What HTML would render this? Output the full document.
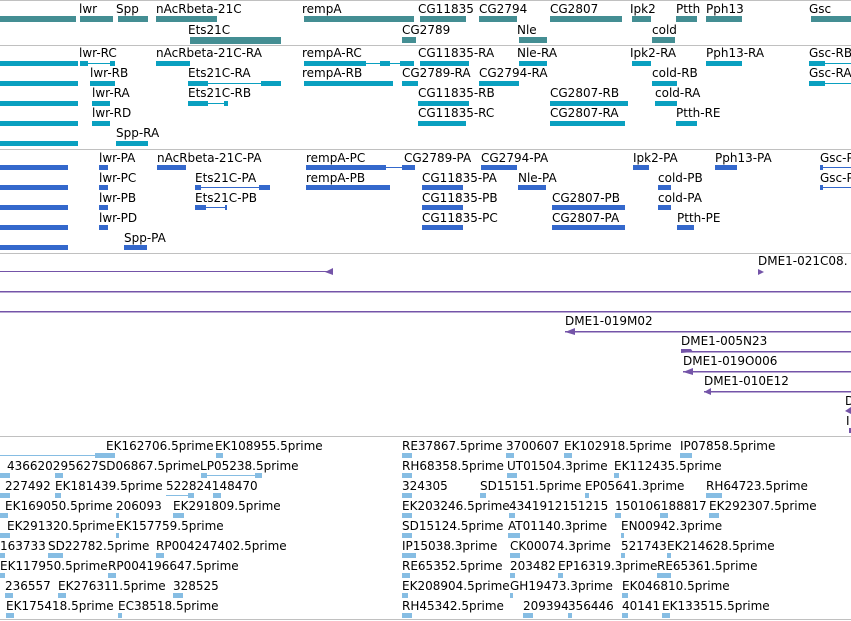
<!DOCTYPE html>
<html><head><meta charset="utf-8"><style>
html,body{margin:0;padding:0;background:#fff;width:851px;height:621px;overflow:hidden}
svg{display:block}
text{font-family:"DejaVu Sans","Liberation Sans",sans-serif;font-size:12px;fill:#000}
.g{fill:#448e93}.r{fill:#0aa0c0}.p{fill:#3468cc}.v{fill:#7454a8}.e{fill:#86bde3}
</style></head><body>
<svg width="851" height="621" viewBox="0 0 851 621">
<g fill="#c0c0c0">
<rect x="0" y="0" width="851" height="1"/><rect x="0" y="45" width="851" height="1"/>
<rect x="0" y="149" width="851" height="1"/><rect x="0" y="253" width="851" height="1"/>
<rect x="0" y="436" width="851" height="1"/><rect x="0" y="619" width="851" height="1"/>
</g>
<text x="79" y="13">lwr</text><text x="116" y="13">Spp</text><text x="156" y="13">nAcRbeta-21C</text>
<text x="302" y="13">rempA</text><text x="418" y="13">CG11835</text><text x="479" y="13">CG2794</text>
<text x="550" y="13">CG2807</text><text x="630" y="13">Ipk2</text><text x="676" y="13">Ptth</text>
<text x="706" y="13">Pph13</text><text x="809" y="13">Gsc</text>
<text x="188" y="34">Ets21C</text><text x="402" y="34">CG2789</text><text x="517" y="34">Nle</text><text x="652" y="34">cold</text>
<g class="g">
<rect x="0" y="16" width="76" height="6"/><rect x="80" y="16" width="33" height="6"/><rect x="118" y="16" width="30" height="6"/>
<rect x="156" y="16" width="61" height="6"/><rect x="304" y="16" width="110" height="6"/><rect x="420" y="16" width="46" height="6"/>
<rect x="479" y="16" width="38" height="6"/><rect x="550" y="16" width="72" height="6"/><rect x="632" y="16" width="19" height="6"/>
<rect x="676" y="16" width="21" height="6"/><rect x="706" y="16" width="36" height="6"/><rect x="811" y="16" width="40" height="6"/>
<rect x="190" y="37" width="91" height="7"/><rect x="402" y="37" width="14" height="6"/><rect x="519" y="37" width="28" height="6"/><rect x="652" y="37" width="23" height="6"/>
</g>
<text x="79" y="57">lwr-RC</text><text x="156" y="57">nAcRbeta-21C-RA</text><text x="302" y="57">rempA-RC</text><text x="418" y="57">CG11835-RA</text><text x="517" y="57">Nle-RA</text><text x="630" y="57">Ipk2-RA</text><text x="706" y="57">Pph13-RA</text><text x="809" y="57">Gsc-RB</text>
<text x="90" y="77">lwr-RB</text><text x="188" y="77">Ets21C-RA</text><text x="302" y="77">rempA-RB</text><text x="402" y="77">CG2789-RA</text><text x="479" y="77">CG2794-RA</text><text x="652" y="77">cold-RB</text><text x="809" y="77">Gsc-RA</text>
<text x="92" y="97">lwr-RA</text><text x="188" y="97">Ets21C-RB</text><text x="418" y="97">CG11835-RB</text><text x="550" y="97">CG2807-RB</text><text x="655" y="97">cold-RA</text>
<text x="92" y="117">lwr-RD</text><text x="418" y="117">CG11835-RC</text><text x="550" y="117">CG2807-RA</text><text x="676" y="117">Ptth-RE</text>
<text x="116" y="137">Spp-RA</text>
<g class="r">
<rect x="0" y="61" width="78" height="5"/><rect x="0" y="81" width="78" height="5"/><rect x="0" y="101" width="78" height="5"/><rect x="0" y="121" width="78" height="5"/><rect x="0" y="141" width="78" height="5"/>
<rect x="80" y="61" width="8" height="5"/><rect x="88" y="63" width="24" height="1"/><rect x="110" y="61" width="5" height="5"/>
<rect x="156" y="61" width="34" height="5"/><rect x="304" y="61" width="62" height="5"/><rect x="366" y="63" width="48" height="1"/><rect x="400" y="61" width="14" height="5"/><rect x="380" y="61" width="10" height="5"/>
<rect x="420" y="61" width="49" height="5"/><rect x="519" y="61" width="28" height="5"/><rect x="632" y="61" width="19" height="5"/><rect x="706" y="61" width="36" height="5"/>
<rect x="809" y="61" width="16" height="5"/><rect x="825" y="63" width="26" height="1"/>
<rect x="90" y="81" width="25" height="5"/><rect x="188" y="81" width="20" height="5"/><rect x="208" y="83" width="55" height="1"/><rect x="261" y="81" width="20" height="5"/>
<rect x="304" y="81" width="89" height="5"/><rect x="402" y="81" width="16" height="5"/><rect x="479" y="81" width="40" height="5"/><rect x="652" y="81" width="25" height="5"/>
<rect x="809" y="81" width="16" height="5"/><rect x="825" y="83" width="26" height="1"/>
<rect x="92" y="101" width="18" height="5"/><rect x="188" y="101" width="20" height="5"/><rect x="208" y="103" width="20" height="1"/><rect x="224" y="101" width="4" height="5"/>
<rect x="418" y="101" width="51" height="5"/><rect x="550" y="101" width="78" height="5"/><rect x="655" y="101" width="22" height="5"/>
<rect x="92" y="121" width="18" height="5"/><rect x="418" y="121" width="48" height="5"/><rect x="550" y="121" width="75" height="5"/><rect x="676" y="121" width="21" height="5"/>
<rect x="116" y="141" width="32" height="5"/>
</g>
<text x="99" y="162">lwr-PA</text><text x="157" y="162">nAcRbeta-21C-PA</text><text x="306" y="162">rempA-PC</text><text x="404" y="162">CG2789-PA</text><text x="481" y="162">CG2794-PA</text><text x="633" y="162">Ipk2-PA</text><text x="715" y="162">Pph13-PA</text><text x="820" y="162">Gsc-P</text>
<text x="99" y="182">lwr-PC</text><text x="195" y="182">Ets21C-PA</text><text x="306" y="182">rempA-PB</text><text x="422" y="182">CG11835-PA</text><text x="518" y="182">Nle-PA</text><text x="658" y="182">cold-PB</text><text x="820" y="182">Gsc-P</text>
<text x="99" y="202">lwr-PB</text><text x="195" y="202">Ets21C-PB</text><text x="422" y="202">CG11835-PB</text><text x="552" y="202">CG2807-PB</text><text x="658" y="202">cold-PA</text>
<text x="99" y="222">lwr-PD</text><text x="422" y="222">CG11835-PC</text><text x="552" y="222">CG2807-PA</text><text x="677" y="222">Ptth-PE</text>
<text x="124" y="242">Spp-PA</text>
<g class="p">
<rect x="0" y="165" width="68" height="5"/><rect x="0" y="185" width="68" height="5"/><rect x="0" y="205" width="68" height="5"/><rect x="0" y="225" width="68" height="5"/><rect x="0" y="245" width="68" height="5"/>
<rect x="99" y="165" width="9" height="5"/><rect x="99" y="185" width="9" height="5"/><rect x="99" y="205" width="9" height="5"/><rect x="99" y="225" width="9" height="5"/>
<rect x="157" y="165" width="29" height="5"/><rect x="306" y="165" width="80" height="5"/><rect x="386" y="167" width="28" height="1"/><rect x="402" y="165" width="13" height="5"/>
<rect x="481" y="165" width="36" height="5"/><rect x="633" y="165" width="16" height="5"/><rect x="715" y="165" width="22" height="5"/>
<rect x="820" y="165" width="3" height="5"/><rect x="820" y="167" width="31" height="1"/>
<rect x="195" y="185" width="6" height="5"/><rect x="201" y="187" width="60" height="1"/><rect x="259" y="185" width="11" height="5"/>
<rect x="306" y="185" width="84" height="5"/><rect x="422" y="185" width="41" height="5"/><rect x="518" y="185" width="28" height="5"/><rect x="658" y="185" width="13" height="5"/>
<rect x="820" y="185" width="3" height="5"/><rect x="820" y="187" width="31" height="1"/>
<rect x="195" y="205" width="11" height="5"/><rect x="206" y="207" width="21" height="1"/><rect x="225" y="205" width="2" height="5"/>
<rect x="422" y="205" width="41" height="5"/><rect x="552" y="205" width="73" height="5"/><rect x="658" y="205" width="13" height="5"/>
<rect x="422" y="225" width="41" height="5"/><rect x="552" y="225" width="73" height="5"/><rect x="677" y="225" width="17" height="5"/>
<rect x="124" y="245" width="23" height="5"/>
</g>
<text x="758" y="265">DME1-021C08.</text>
<text x="565" y="325">DME1-019M02</text><text x="681" y="345">DME1-005N23</text><text x="683" y="365">DME1-019O006</text><text x="704" y="385">DME1-010E12</text>
<text x="845" y="405">D</text><text x="846" y="425">I</text>
<g class="v">
<polygon points="758,269 764,272 758,275"/>
<rect x="0" y="271" width="330" height="1"/><polygon points="325,272 333,268 333,275"/>
<rect x="0" y="291" width="851" height="1.5"/><rect x="0" y="311" width="851" height="1.5"/>
<rect x="565" y="331" width="286" height="1.5"/><polygon points="565,332 575,328 575,335"/>
<rect x="681" y="351" width="170" height="1.5"/><polygon points="681,349 691,349 693,352 681,353"/>
<rect x="683" y="371" width="168" height="1.5"/><polygon points="683,372 693,368 693,375"/>
<rect x="704" y="391" width="147" height="1.5"/><polygon points="704,392 711,388 711,395"/>
<polygon points="845,411 851,407 851,414"/><rect x="849" y="428" width="2" height="5"/>
</g>
<g>
<text x="106" y="450">EK162706.5prime</text><text x="215" y="450">EK108955.5prime</text>
<text x="402" y="450">RE37867.5prime</text><text x="506" y="450">3700607</text><text x="564" y="450">EK102918.5prime</text><text x="680" y="450">IP07858.5prime</text>
<text x="7" y="470">436620295627SD06867.5primeLP05238.5prime</text>
<text x="402" y="470">RH68358.5prime</text><text x="507" y="470">UT01504.3prime</text><text x="614" y="470">EK112435.5prime</text>
<text x="5" y="490">227492</text><text x="55" y="490">EK181439.5prime</text><text x="166" y="490">522824148470</text>
<text x="402" y="490">324305</text><text x="480" y="490">SD15151.5prime</text><text x="585" y="490">EP05641.3prime</text><text x="706" y="490">RH64723.5prime</text>
<text x="5" y="510">EK169050.5prime</text><text x="116" y="510">206093</text><text x="173" y="510">EK291809.5prime</text>
<text x="402" y="510">EK203246.5prime</text><text x="509" y="510">4341912151215</text><text x="615" y="510">150106188817</text><text x="709" y="510">EK292307.5prime</text>
<text x="7" y="530">EK291320.5prime</text><text x="116" y="530">EK157759.5prime</text>
<text x="402" y="530">SD15124.5prime</text><text x="508" y="530">AT01140.3prime</text><text x="621" y="530">EN00942.3prime</text>
<text x="0" y="550">163733</text><text x="48" y="550">SD22782.5prime</text><text x="156" y="550">RP004247402.5prime</text>
<text x="402" y="550">IP15038.3prime</text><text x="510" y="550">CK00074.3prime</text><text x="621" y="550">521743</text><text x="667" y="550">EK214628.5prime</text>
<text x="0" y="570">EK117950.5prime</text><text x="108" y="570">RP004196647.5prime</text>
<text x="402" y="570">RE65352.5prime</text><text x="510" y="570">203482</text><text x="558" y="570">EP16319.3prime</text><text x="657" y="570">RE65361.5prime</text>
<text x="5" y="590">236557</text><text x="58" y="590">EK276311.5prime</text><text x="173" y="590">328525</text>
<text x="402" y="590">EK208904.5prime</text><text x="510" y="590">GH19473.3prime</text><text x="622" y="590">EK046810.5prime</text>
<text x="6" y="610">EK175418.5prime</text><text x="118" y="610">EC38518.5prime</text>
<text x="402" y="610">RH45342.5prime</text><text x="523" y="610">209394</text><text x="568" y="610">356446</text><text x="622" y="610">40141</text><text x="662" y="610">EK133515.5prime</text>
</g>
<g class="e">
<rect x="0" y="455" width="100" height="1"/><rect x="95" y="453" width="20" height="5"/><rect x="216" y="453" width="7" height="5"/>
<rect x="402" y="453" width="10" height="5"/><rect x="506" y="453" width="8" height="5"/><rect x="564" y="453" width="8" height="5"/><rect x="680" y="453" width="12" height="5"/>
<rect x="0" y="473" width="10" height="5"/><rect x="55" y="473" width="8" height="5"/><rect x="201" y="475" width="60" height="1"/><rect x="201" y="473" width="6" height="5"/><rect x="255" y="473" width="7" height="5"/>
<rect x="402" y="473" width="10" height="5"/><rect x="507" y="473" width="10" height="5"/><rect x="614" y="473" width="5" height="5"/>
<rect x="0" y="493" width="10" height="5"/><rect x="55" y="493" width="6" height="5"/><rect x="166" y="495" width="28" height="1"/><rect x="188" y="493" width="6" height="5"/><rect x="213" y="493" width="8" height="5"/>
<rect x="402" y="493" width="10" height="5"/><rect x="480" y="493" width="6" height="5"/><rect x="585" y="493" width="4" height="5"/><rect x="706" y="493" width="16" height="5"/>
<rect x="0" y="513" width="8" height="5"/><rect x="116" y="513" width="3" height="5"/><rect x="173" y="513" width="11" height="5"/>
<rect x="402" y="513" width="10" height="5"/><rect x="509" y="513" width="6" height="5"/><rect x="615" y="513" width="6" height="5"/><rect x="660" y="513" width="8" height="5"/><rect x="709" y="513" width="10" height="5"/>
<rect x="0" y="533" width="10" height="5"/><rect x="116" y="533" width="3" height="5"/>
<rect x="402" y="533" width="10" height="5"/><rect x="508" y="533" width="12" height="5"/><rect x="621" y="533" width="3" height="5"/>
<rect x="0" y="553" width="5" height="5"/><rect x="48" y="553" width="15" height="5"/><rect x="156" y="553" width="8" height="5"/>
<rect x="402" y="553" width="14" height="5"/><rect x="510" y="553" width="10" height="5"/><rect x="621" y="553" width="4" height="5"/><rect x="667" y="553" width="4" height="5"/>
<rect x="0" y="573" width="5" height="5"/><rect x="108" y="573" width="8" height="5"/>
<rect x="402" y="573" width="8" height="5"/><rect x="510" y="573" width="5" height="5"/><rect x="558" y="573" width="5" height="5"/><rect x="657" y="573" width="14" height="5"/>
<rect x="5" y="593" width="8" height="5"/><rect x="58" y="593" width="8" height="5"/><rect x="173" y="593" width="10" height="5"/>
<rect x="402" y="593" width="6" height="5"/><rect x="510" y="593" width="3" height="5"/><rect x="622" y="593" width="6" height="5"/>
<rect x="6" y="613" width="8" height="5"/><rect x="118" y="613" width="4" height="5"/>
<rect x="402" y="613" width="10" height="5"/><rect x="523" y="613" width="10" height="5"/><rect x="568" y="613" width="4" height="5"/><rect x="622" y="613" width="6" height="5"/><rect x="662" y="613" width="8" height="5"/>
</g>
</svg>
</body></html>
